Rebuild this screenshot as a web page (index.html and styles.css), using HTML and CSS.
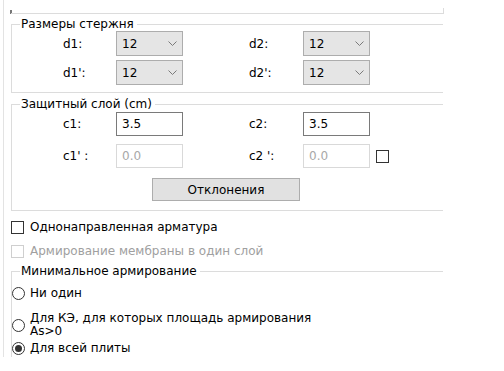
FILE: index.html
```html
<!DOCTYPE html>
<html lang="ru">
  <head>
    <meta charset="UTF-8" />
    <meta name="viewport" content="width=device-width, initial-scale=1.0" />
    <title>Армирование</title>
    <link rel="stylesheet" href="styles.css">
  </head>
  <body>
    <div class="panel">
      <div class="top-edge">
        <span class="mark"></span>
        <div class="top-line"></div>
      </div>

      <fieldset class="group g-sizes">
        <legend>Размеры стержня</legend>
        <div class="row">
          <span class="label">d1:</span>
          <div class="select">
            <span>12</span>
            <svg width="9" height="5" viewBox="0 0 9 5"><polyline points="0.5,0.5 4.5,4.5 8.5,0.5" /></svg>
          </div>
          <span class="label label-2">d2:</span>
          <div class="select">
            <span>12</span>
            <svg width="9" height="5" viewBox="0 0 9 5"><polyline points="0.5,0.5 4.5,4.5 8.5,0.5" /></svg>
          </div>
        </div>
        <div class="row">
          <span class="label">d1':</span>
          <div class="select">
            <span>12</span>
            <svg width="9" height="5" viewBox="0 0 9 5"><polyline points="0.5,0.5 4.5,4.5 8.5,0.5" /></svg>
          </div>
          <span class="label label-2">d2':</span>
          <div class="select">
            <span>12</span>
            <svg width="9" height="5" viewBox="0 0 9 5"><polyline points="0.5,0.5 4.5,4.5 8.5,0.5" /></svg>
          </div>
        </div>
      </fieldset>

      <fieldset class="group g-cover">
        <legend>Защитный слой (cm)</legend>
        <div class="row">
          <span class="label">c1:</span>
          <div class="field">3.5</div>
          <span class="label label-2">c2:</span>
          <div class="field">3.5</div>
        </div>
        <div class="row">
          <span class="label">c1' :</span>
          <div class="field disabled">0.0</div>
          <span class="label label-2">c2 ':</span>
          <div class="field disabled">0.0</div>
          <span class="box"></span>
        </div>
        <div class="button">Отклонения</div>
      </fieldset>

      <div class="check">
        <span class="box"></span>
        <span>Однонаправленная арматура</span>
      </div>
      <div class="check disabled">
        <span class="box"></span>
        <span>Армирование мембраны в один слой</span>
      </div>

      <fieldset class="group g-min">
        <legend>Минимальное армирование</legend>
        <div class="radio r-first">
          <svg width="13" height="13" viewBox="0 0 13 13"><circle cx="6.5" cy="6.5" r="6" /></svg>
          <span>Ни один</span>
        </div>
        <div class="radio r-second">
          <svg width="13" height="13" viewBox="0 0 13 13"><circle cx="6.5" cy="6.5" r="6" /></svg>
          <span>Для КЭ, для которых площадь армирования<br>As&gt;0</span>
        </div>
        <div class="radio r-third">
          <svg width="13" height="13" viewBox="0 0 13 13"><circle cx="6.5" cy="6.5" r="6" /><circle class="dot" cx="6.5" cy="6.5" r="3.5" /></svg>
          <span>Для всей плиты</span>
        </div>
      </fieldset>
    </div>
  </body>
</html>
```
FILE: styles.css
```css
body {
  margin: 0;
  padding: 0;
  font-family: "DejaVu Sans", sans-serif;
  font-size: 12px;
  color: #000;
  background-color: #fff;
}
.panel {
  margin-left: 3px;
  padding-left: 7px;
  width: 460px;
  height: 357px;
  border-left: 1px solid #e3e3e3;
  box-sizing: border-box;
}
.top-edge {
  display: flex;
  height: 14px;
  align-items: flex-end;
}
.mark {
  align-self: flex-start;
  width: 2px;
  height: 4px;
  margin: 10px -1px 0 -1px;
  background-color: #777;
}
.top-line {
  width: 432px;
  height: 5px;
  border-bottom: 1px solid #dcdcdc;
  border-right: 1px solid #dcdcdc;
  box-sizing: content-box;
}

/* group boxes */
.group {
  margin: 0;
  padding: 0;
  width: 432px;
  min-inline-size: auto;
  border: 1px solid #dcdcdc;
  border-right: none;
  box-sizing: border-box;
}
.group legend {
  margin-left: 8px;
  padding: 0 3px 0 1px;
  line-height: 15px;
}
.g-sizes {
  margin-top: 3px;
  padding-bottom: 7px;
}
.g-cover {
  margin-top: 4px;
  padding-bottom: 9px;
}
.g-min {
  margin-top: 6px;
  height: 93px;
  border-bottom: none;
}

.row {
  display: grid;
  grid-template-columns: 53px 67px 120px 67px auto;
  align-items: center;
  margin-left: 51px;
}
.g-sizes .row:first-of-type {
  margin-top: -1px;
}
.g-sizes .row + .row {
  margin-top: 4px;
}
.g-cover .row + .row {
  margin-top: 8px;
}
.label-2 {
  padding-left: 66px;
}

.select {
  display: flex;
  align-items: center;
  justify-content: space-between;
  height: 25px;
  padding: 0 5px 0 5px;
  border: 1px solid #adadad;
  background-color: #e5e5e5;
  box-sizing: border-box;
}
.select polyline {
  fill: none;
  stroke: #7a7a7a;
  stroke-width: 1;
}
.field {
  display: flex;
  align-items: center;
  height: 24px;
  padding-left: 5px;
  border: 1px solid #7a7a7a;
  background-color: #fff;
  box-sizing: border-box;
}
.field.disabled {
  border-color: #d9d9d9;
  color: #a8a8a8;
}
.box {
  width: 13px;
  height: 13px;
  border: 1px solid #333;
  background-color: #fff;
  box-sizing: border-box;
}
.row .box {
  margin-left: 6px;
}
.button {
  display: flex;
  align-items: center;
  justify-content: center;
  margin: 10px 0 0 140px;
  width: 148px;
  height: 23px;
  border: 1px solid #adadad;
  background-color: #e1e1e1;
  box-sizing: border-box;
}

/* check boxes */
.check {
  display: flex;
  align-items: center;
  gap: 6px;
  line-height: 13px;
  margin-top: 10px;
}
.check + .check {
  margin-top: 11px;
}
.check.disabled {
  color: #a0a0a0;
}
.check.disabled .box {
  border-color: #cfcfcf;
}

/* radios */
.radio {
  display: flex;
  align-items: center;
  gap: 5px;
  line-height: 13px;
}
.radio circle {
  fill: #fff;
  stroke: #333;
  stroke-width: 1;
}
.radio circle.dot {
  fill: #333;
  stroke: none;
}
.r-first {
  margin-top: 8px;
}
.r-second {
  margin-top: 12px;
}
.r-third {
  margin-top: 4px;
}
```
